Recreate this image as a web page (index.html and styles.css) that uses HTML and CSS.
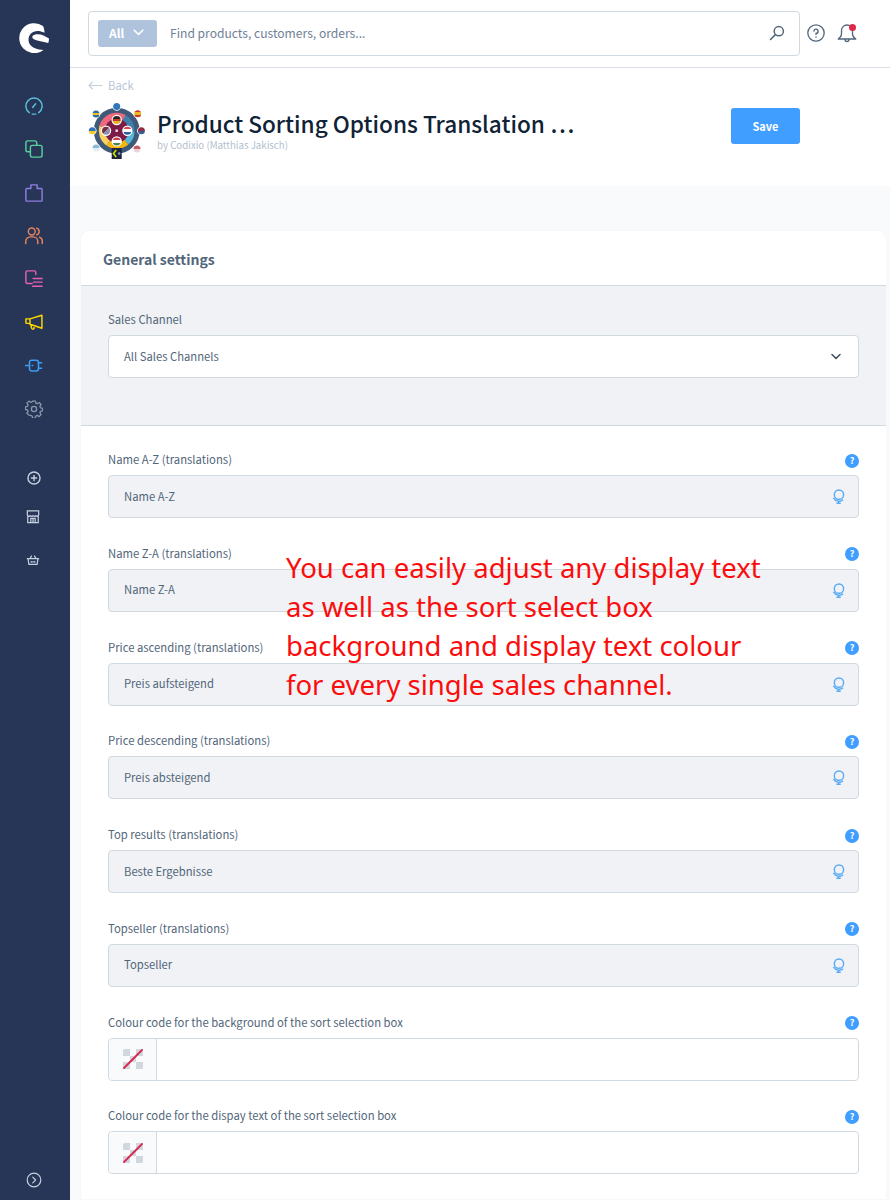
FILE: index.html
```html
<!DOCTYPE html>
<html lang="en">
<head>
<meta charset="utf-8">
<title>Product Sorting Options Translation</title>
<link rel="stylesheet" href="styles.css">
</head>
<body>
<div class="app">
  <nav class="sidebar">
    <div class="logo">
      <svg width="30" height="30" viewBox="0 0 30 30"><path fill="#fff" d="M24 3A15 15 0 1 0 24.500 27C19 26.500 12.500 25 10.300 20.500 8.800 17 9.500 13 12 10.500 15 7.500 20 7 25.500 9.800 25.500 7.500 25 5 24 3z"/><path fill="#fff" d="M14 12.500C17 10.500 21 11 24.500 12.500L30 15.500C30 17 29.800 18.500 29.300 20 25 19 20 18 16.500 17 13.500 16 12.500 14 14 12.500z"/></svg>
    </div>
    <div class="nav-main">
      <svg class="nav-icon" viewBox="0 0 20 20" fill="none" stroke="#57c5dc" stroke-width="1.600" stroke-linecap="round"><path d="M4.800 17.400A9 9 0 1 1 15.200 17.400M8.500 11.700l3.300-4.200M8 19h4"/></svg>
      <svg class="nav-icon" viewBox="0 0 20 20" fill="none" stroke="#57d09a" stroke-width="1.600"><rect x="1" y="1" width="12" height="12" rx="2"/><rect x="6" y="6" width="13" height="13" rx="2" fill="#273657"/></svg>
      <svg class="nav-icon" viewBox="0 0 20 20" fill="none" stroke="#8d7fe0" stroke-width="1.600" stroke-linejoin="round"><path d="M6.500 5H2a1 1 0 0 0-1 1V18a1 1 0 0 0 1 1h16a1 1 0 0 0 1-1V6a1 1 0 0 0-1-1h-4.500V1h-7z"/></svg>
      <svg class="nav-icon" viewBox="0 0 20 20" fill="none" stroke="#e8835e" stroke-width="1.600" stroke-linecap="round"><circle cx="7.500" cy="5" r="3.800"/><path d="M.8 18.500V16a5 5 0 0 1 5-5h3.400a5 5 0 0 1 5 5v2.500M13 1.300a3.900 3.900 0 0 1 0 7.400M16 11.300a4.700 4.700 0 0 1 3.200 4.700v2.500"/></svg>
      <svg class="nav-icon" viewBox="0 0 20 20" fill="none" stroke="#e85fb4" stroke-width="1.600" stroke-linecap="round"><path d="M8 15H2.500A1.500 1.500 0 0 1 1 13.500v-11A1.500 1.500 0 0 1 2.500 1h7.800A1.500 1.500 0 0 1 12 2.500V5M9 9.500h10M9.500 13.500h9.500M8.500 18h10.500"/></svg>
      <svg class="nav-icon" viewBox="0 0 20 20" fill="none" stroke="#ffd800" stroke-width="1.600" stroke-linejoin="round"><path d="M1 6.500h4.500v5H1.800a.8.800 0 0 1-.8-.8zM5.500 6.500 18.800 2.500v14.500l-13.300-4.500zM6.300 12.500l1 4a1.500 1.500 0 0 0 2.800.7l-.4-3.500"/></svg>
      <svg class="nav-icon" viewBox="0 0 20 20" fill="none" stroke="#3d9cf5" stroke-width="1.700" stroke-linecap="round"><rect x="5" y="3.500" width="10" height="12" rx="2.500"/><path d="M.5 9.500H5M15 6.500h3.500M15 12.500h3.500M8 9.500h.5"/></svg>
      <svg class="nav-icon" viewBox="0 0 20 20" fill="none" stroke="#8a97ab" stroke-width="1.500" stroke-linejoin="round"><circle cx="10" cy="10" r="2.900"/><path d="M8.300 1h3.400l.5 2.500 1.600.7 2.200-1.400 2.300 2.300-1.400 2.200.7 1.600 2.400.5v3.200l-2.400.5-.7 1.600 1.400 2.200-2.300 2.300-2.200-1.400-1.600.7-.5 2.500H8.300l-.5-2.500-1.600-.7L4 17.500 1.700 15.200l1.400-2.200-.7-1.600L0 10.900V7.700l2.400-.5.700-1.600L1.700 3.400 4 1.100l2.200 1.400 1.600-.7z" transform="translate(.5 .2) scale(.95)"/></svg>
    </div>
    <div class="nav-extra">
      <svg class="nav-icon-small" viewBox="0 0 16 16" fill="none" stroke="#c6d0e0" stroke-width="1.600" stroke-linecap="round"><circle cx="8" cy="8" r="6.900"/><path d="M8 5v6M5 8h6"/></svg>
      <svg class="nav-icon-small nav-shift" viewBox="0 0 16 16" fill="none" stroke="#c6d0e0" stroke-width="1.400"><path d="M1.500 1h13v4.500a1.800 1.800 0 0 1-3.200 1 2.200 2.200 0 0 1-3.300 0 2.200 2.200 0 0 1-3.300 0 1.800 1.800 0 0 1-3.200-1zM2 7v7.500h12V7M5.500 14.500V9.500h5v5M8 9.500v5"/></svg>
      <svg class="nav-icon-small nav-shift" viewBox="0 0 16 16" fill="none" stroke="#c6d0e0" stroke-width="1.400" stroke-linejoin="round"><path d="M1 6.500h14M2.300 6.500l1 6.500h9.400l1-6.500M4.500 6.500l2-3.500M11.500 6.500l-2-3.500M6 9v2M8 9v2M10 9v2"/></svg>
    </div>
    <svg class="nav-collapse" viewBox="0 0 16 16" fill="none" stroke="#c6d0e0" stroke-width="1.200" stroke-linecap="round" stroke-linejoin="round"><circle cx="8" cy="8" r="6.800"/><path d="M6.800 5.200 9.600 8l-2.800 2.800"/></svg>
  </nav>

  <div class="main">
    <header class="topbar">
      <div class="search">
        <span class="search-type">All
          <svg width="11" height="7" viewBox="0 0 11 7" fill="none" stroke="#fff" stroke-width="1.600" stroke-linecap="round" stroke-linejoin="round"><path d="M1.200 1.200 5.500 5.400l4.300-4.200"/></svg>
        </span>
        <span class="search-text">Find products, customers, orders...</span>
        <svg class="search-icon" width="16" height="16" viewBox="0 0 16 16" fill="none" stroke="#52667a" stroke-width="1.500" stroke-linecap="round"><circle cx="9.800" cy="6.200" r="4.600"/><path d="M6.400 9.600 1.500 14.500"/></svg>
      </div>
      <svg class="help-icon" width="18" height="18" viewBox="0 0 18 18" fill="none" stroke="#52667a" stroke-width="1.300" stroke-linecap="round"><circle cx="9" cy="9" r="8.200"/><path d="M6.900 7.100A2.100 2.100 0 1 1 9 9.400v1M9 12.800v.4"/></svg>
      <span class="bell">
        <svg width="20" height="20" viewBox="0 0 20 20" fill="none" stroke="#52667a" stroke-width="1.300" stroke-linejoin="round"><path d="M10 2a5.500 5.500 0 0 0-5.500 5.500V11c0 2-1 3.500-3.300 5h17.600c-2.300-1.500-3.300-3-3.300-5V7.500A5.500 5.500 0 0 0 10 2zM8 16.500a2 2 0 0 0 4 0"/></svg>
        <span class="bell-dot"></span>
      </span>
    </header>

    <section class="page-head">
      <div class="back">
        <svg width="15" height="9" viewBox="0 0 15 9" fill="none" stroke="#c3cedd" stroke-width="1.100" stroke-linecap="round" stroke-linejoin="round"><path d="M14 4.500H1M4.500 1 1 4.500 4.500 8"/></svg>
        <span>Back</span>
      </div>
      <div class="title-row">
        <svg class="plugin-logo" width="58" height="58" viewBox="0 0 58 58">
          <defs>
            <linearGradient id="de" x1="0" y1="0" x2="0" y2="1"><stop offset=".34" stop-color="#2b2320"/><stop offset=".34" stop-color="#c0392b"/><stop offset=".67" stop-color="#c0392b"/><stop offset=".67" stop-color="#e6b422"/></linearGradient>
            <linearGradient id="nl" x1="0" y1="0" x2="0" y2="1"><stop offset=".34" stop-color="#d64550"/><stop offset=".34" stop-color="#fff"/><stop offset=".67" stop-color="#fff"/><stop offset=".67" stop-color="#2d5fa0"/></linearGradient>
            <linearGradient id="hu" x1="0" y1="0" x2="0" y2="1"><stop offset=".34" stop-color="#c9404c"/><stop offset=".34" stop-color="#fff"/><stop offset=".67" stop-color="#fff"/><stop offset=".67" stop-color="#48865a"/></linearGradient>
            <linearGradient id="ua" x1="0" y1="0" x2="0" y2="1"><stop offset=".5" stop-color="#2f72b8"/><stop offset=".5" stop-color="#f3c92c"/></linearGradient>
            <linearGradient id="es" x1="0" y1="0" x2="0" y2="1"><stop offset=".28" stop-color="#c63a2c"/><stop offset=".28" stop-color="#edb71f"/><stop offset=".72" stop-color="#edb71f"/><stop offset=".72" stop-color="#c63a2c"/></linearGradient>
            <linearGradient id="se" x1="0" y1="0" x2="0" y2="1"><stop offset=".4" stop-color="#2f6da6"/><stop offset=".4" stop-color="#e8c12c"/><stop offset=".6" stop-color="#e8c12c"/><stop offset=".6" stop-color="#2f6da6"/></linearGradient>
            <linearGradient id="us" x1="0" y1="0" x2="0" y2="1"><stop offset=".5" stop-color="#c85a68"/><stop offset=".5" stop-color="#e9d5da"/></linearGradient>
            <linearGradient id="pk" x1="0" y1="0" x2="0" y2="1"><stop offset=".5" stop-color="#8f2f42"/><stop offset=".5" stop-color="#3c5a90"/></linearGradient>
            <linearGradient id="wl" x1="0" y1="0" x2="0" y2="1"><stop offset=".5" stop-color="#8db8d8"/><stop offset=".5" stop-color="#e4edf2"/></linearGradient>
            <linearGradient id="uk" x1="0" y1="0" x2="1" y2="1"><stop offset=".5" stop-color="#7c2f48"/><stop offset=".5" stop-color="#8d90a8"/></linearGradient>
          </defs>
          <circle cx="28.700" cy="28.700" r="23" fill="#3e5a78"/>
          <path d="M28.700 28.700 11.300 24A18 18 0 0 1 37.700 13.100z" fill="#f0687c"/>
          <path d="M28.700 28.700 37.700 13.100A18 18 0 0 1 46.600 30.300z" fill="#3f81ad"/>
          <path d="M28.700 28.700 46.600 30.300A18 18 0 0 1 40.300 42.500z" fill="#55b8d8"/>
          <path d="M28.700 28.700 40.300 42.500A18 18 0 0 1 18.400 43.400z" fill="#f6b80e"/>
          <path d="M28.700 28.700 18.400 43.400A18 18 0 0 1 11.300 24z" fill="#fdd062"/>
          <circle cx="28.700" cy="28.700" r="12" fill="#7a1c45"/>
          <circle cx="28.700" cy="18" r="5.200" fill="#fff"/><circle cx="28.700" cy="18" r="4" fill="url(#de)"/>
          <circle cx="18" cy="28.700" r="5.200" fill="#fff"/><circle cx="18" cy="28.700" r="4" fill="url(#uk)"/>
          <circle cx="39.400" cy="28.700" r="5.200" fill="#fff"/><circle cx="39.400" cy="28.700" r="4" fill="url(#nl)"/>
          <circle cx="28.700" cy="39.400" r="5.200" fill="#fff"/><circle cx="28.700" cy="39.400" r="4" fill="url(#hu)"/>
          <rect x="27.500" y="27.500" width="2.400" height="2.400" fill="#f2e9ec"/>
          <circle cx="28.700" cy="4.400" r="4.300" fill="#fff"/><circle cx="28.700" cy="4.400" r="3.500" fill="#2e78bd"/>
          <circle cx="49.700" cy="11.700" r="4.300" fill="#fff"/><circle cx="49.700" cy="11.700" r="3.500" fill="url(#es)"/>
          <circle cx="53.400" cy="28.700" r="4.300" fill="#fff"/><circle cx="53.400" cy="28.700" r="3.500" fill="url(#pk)"/>
          <circle cx="49" cy="47" r="4.300" fill="#fff"/><circle cx="49" cy="47" r="3.500" fill="url(#us)"/>
          <circle cx="8" cy="12" r="4.300" fill="#fff"/><circle cx="8" cy="12" r="3.500" fill="url(#se)"/>
          <circle cx="4.300" cy="28.700" r="4.300" fill="#fff"/><circle cx="4.300" cy="28.700" r="3.500" fill="url(#ua)"/>
          <circle cx="8" cy="46" r="4.300" fill="#fff"/><circle cx="8" cy="46" r="3.500" fill="url(#wl)"/>
          <rect x="23.700" y="46" width="10" height="11" fill="#1b2340"/>
          <path d="M28.200 48l-2.700 3.500 2.700 3.500" fill="none" stroke="#c6e000" stroke-width="1.700"/>
          <circle cx="31.200" cy="51.500" r="1.300" fill="#8fa3b5"/>
        </svg>
        <div class="title-block">
          <h1 class="title">Product Sorting Options Translation …</h1>
          <div class="byline">by Codixio (Matthias Jakisch)</div>
        </div>
        <button class="save" type="button">Save</button>
      </div>
    </section>

    <section class="content">
      <div class="card">
        <h2 class="card-title">General settings</h2>
        <div class="channel">
          <label class="label">Sales Channel</label>
          <div class="select">All Sales Channels
            <svg width="10" height="7" viewBox="0 0 10 7" fill="none" stroke="#3d4c5c" stroke-width="1.500" stroke-linecap="round" stroke-linejoin="round"><path d="M1 1.500l4 4 4-4"/></svg>
          </div>
        </div>
        <div class="fields">
          <div class="field">
            <div class="field-head"><label class="label">Name A-Z (translations)</label><span class="hint">?</span></div>
            <div class="input disabled">Name A-Z <svg class="globe" viewBox="0 0 14 16" fill="none" stroke="#57aaf7" stroke-width="1.500"><circle cx="7.500" cy="6" r="5"/><path d="M1.500 9.500c2.500 4 7.500 4.500 10.500 2M7 13v2.300M4.800 15.300h4.600"/></svg></div>
          </div>
          <div class="field">
            <div class="field-head"><label class="label">Name Z-A (translations)</label><span class="hint">?</span></div>
            <div class="input disabled">Name Z-A <svg class="globe" viewBox="0 0 14 16" fill="none" stroke="#57aaf7" stroke-width="1.500"><circle cx="7.500" cy="6" r="5"/><path d="M1.500 9.500c2.500 4 7.500 4.500 10.500 2M7 13v2.300M4.800 15.300h4.600"/></svg></div>
          </div>
          <div class="field">
            <div class="field-head"><label class="label">Price ascending (translations)</label><span class="hint">?</span></div>
            <div class="input disabled">Preis aufsteigend <svg class="globe" viewBox="0 0 14 16" fill="none" stroke="#57aaf7" stroke-width="1.500"><circle cx="7.500" cy="6" r="5"/><path d="M1.500 9.500c2.500 4 7.500 4.500 10.500 2M7 13v2.300M4.800 15.300h4.600"/></svg></div>
          </div>
          <div class="field">
            <div class="field-head"><label class="label">Price descending (translations)</label><span class="hint">?</span></div>
            <div class="input disabled">Preis absteigend <svg class="globe" viewBox="0 0 14 16" fill="none" stroke="#57aaf7" stroke-width="1.500"><circle cx="7.500" cy="6" r="5"/><path d="M1.500 9.500c2.500 4 7.500 4.500 10.500 2M7 13v2.300M4.800 15.300h4.600"/></svg></div>
          </div>
          <div class="field">
            <div class="field-head"><label class="label">Top results (translations)</label><span class="hint">?</span></div>
            <div class="input disabled">Beste Ergebnisse <svg class="globe" viewBox="0 0 14 16" fill="none" stroke="#57aaf7" stroke-width="1.500"><circle cx="7.500" cy="6" r="5"/><path d="M1.500 9.500c2.500 4 7.500 4.500 10.500 2M7 13v2.300M4.800 15.300h4.600"/></svg></div>
          </div>
          <div class="field">
            <div class="field-head"><label class="label">Topseller (translations)</label><span class="hint">?</span></div>
            <div class="input disabled">Topseller <svg class="globe" viewBox="0 0 14 16" fill="none" stroke="#57aaf7" stroke-width="1.500"><circle cx="7.500" cy="6" r="5"/><path d="M1.500 9.500c2.500 4 7.500 4.500 10.500 2M7 13v2.300M4.800 15.300h4.600"/></svg></div>
          </div>
          <div class="field">
            <div class="field-head"><label class="label">Colour code for the background of the sort selection box</label><span class="hint">?</span></div>
            <div class="input colour">
              <span class="swatch"><svg width="20" height="20" viewBox="0 0 20 20"><path fill="#d1d7de" d="M0 1.500A1.500 1.500 0 0 1 1.500 0H7v7H0zM13 0h5.500A1.500 1.500 0 0 1 20 1.500V7h-7zM7 7h6v6H7zM0 13h7v7H1.500A1.500 1.500 0 0 1 0 18.500zM13 13h7v5.500a1.500 1.500 0 0 1-1.500 1.500H13z"/><path d="M1 19 19 1" stroke="#d9264f" stroke-width="1.800" stroke-linecap="round"/></svg></span>
            </div>
          </div>
          <div class="field">
            <div class="field-head"><label class="label">Colour code for the dispay text of the sort selection box</label><span class="hint">?</span></div>
            <div class="input colour">
              <span class="swatch"><svg width="20" height="20" viewBox="0 0 20 20"><path fill="#d1d7de" d="M0 1.500A1.500 1.500 0 0 1 1.500 0H7v7H0zM13 0h5.500A1.500 1.500 0 0 1 20 1.500V7h-7zM7 7h6v6H7zM0 13h7v7H1.500A1.500 1.500 0 0 1 0 18.500zM13 13h7v5.500a1.500 1.500 0 0 1-1.500 1.500H13z"/><path d="M1 19 19 1" stroke="#d9264f" stroke-width="1.800" stroke-linecap="round"/></svg></span>
            </div>
          </div>
        </div>
        <p class="annotation">You can easily adjust any display text<br>as well as the sort select box<br>background and display text colour<br>for every single sales channel.</p>
      </div>
    </section>
  </div>
</div>
</body>
</html>
```

FILE: styles.css
```css
* { box-sizing: border-box; }
html, body { margin: 0; height: 1200px; overflow: hidden; }
body { font-family: "Noto Sans CJK SC", "Open Sans", sans-serif; color: #52667a; font-size: 11.300px; background: #f9fafb; }
.app { display: flex; height: 1200px; }

.sidebar { position: relative; width: 70px; flex: none; background: #273657; display: flex; flex-direction: column; align-items: center; padding-right: 2px; }
.logo { height: 30px; margin-top: 23px; }
.logo svg { display: block; }
.nav-main { margin-top: 44px; display: flex; flex-direction: column; align-items: center; gap: 25.300px; }
.nav-icon { display: block; width: 18px; height: 18px; }
.nav-extra { margin-top: 53px; display: flex; flex-direction: column; align-items: center; gap: 25px; }
.nav-extra svg:last-child { margin-top: 4px; }
.nav-icon-small { display: block; width: 14px; height: 14px; }
.nav-shift { margin-left: -3px; }
.nav-collapse { position: absolute; left: 26px; bottom: 12px; width: 16px; height: 16px; }

.main { flex: 1; min-width: 0; }
.topbar { height: 68px; background: #fff; border-bottom: 1px solid #d9dee6; display: flex; align-items: center; padding: 0 0 1px 18px; }
.search { width: 712px; height: 45px; border: 1px solid #d1d9e0; border-radius: 4px; background: #fff; display: flex; align-items: center; padding: 0 14px 0 9px; }
.search-type { width: 59px; height: 27px; border-radius: 3px; background: #b0c3dc; color: #fff; font-weight: 700; font-size: 12px; display: flex; align-items: center; gap: 9px; padding: 0 0 1px 11px; }
.search-text { margin-left: 13px; flex: 1; font-size: 12.100px; color: #6f8095; padding-bottom: 2px; }
.help-icon { margin-left: 7px; }
.bell { position: relative; margin-left: 12px; width: 20px; height: 20px; }
.bell svg { display: block; }
.bell-dot { position: absolute; top: 1px; right: 1px; width: 7px; height: 7px; border-radius: 50%; background: #de294c; }

.page-head { height: 118px; background: #fff; padding: 8px 90px 0 18px; }
.back { display: flex; align-items: center; gap: 5px; height: 17px; font-size: 11.300px; color: #b9c6d6; }
.back svg { display: block; margin-top: 1px; }
.title-row { display: flex; align-items: flex-start; }
.plugin-logo { flex: none; margin: 9px 0 0 0; }
.title-block { margin-left: 11px; flex: 1; }
.title { margin: 15px 0 0; font-size: 22.600px; line-height: 32px; font-weight: 500; color: #0f2236; }
.byline { font-size: 9.700px; line-height: 14px; color: #b3c0cf; margin-top: -2px; }
.save { margin-top: 15px; width: 69px; height: 36px; border: 0; border-radius: 3px; background: #3f9eff; color: #fff; font: 700 11px "Noto Sans CJK SC", sans-serif; }

.content { padding: 45px 4px 0 11px; }
.card { position: relative; background: #fff; border-radius: 8px 8px 0 0; box-shadow: 0 0 1px rgba(0,0,0,.1); }
.card-title { margin: 0; height: 55px; padding-left: 22px; font-size: 14px; font-weight: 700; line-height: 56px; color: #52667a; border-bottom: 1px solid #d1d9e0; }
.channel { height: 140px; background: #f0f2f5; border-bottom: 1px solid #d1d9e0; padding: 23px 27px 0; }
.label { display: block; font-size: 11.300px; line-height: 20px; color: #52667a; }
.select { margin-top: 6px; height: 43px; background: #fff; border: 1px solid #d1d9e0; border-radius: 4px; display: flex; align-items: center; justify-content: space-between; padding: 0 17px 2px 15px; font-size: 11.250px; color: #52667a; }
.select svg { display: block; margin-top: 2px; }
.fields { padding: 23px 27px 0; display: grid; grid-auto-rows: 93.750px; }
.field-head { display: flex; justify-content: space-between; align-items: center; height: 20px; }
.hint { width: 14px; height: 14px; margin-top: 3px; border-radius: 50%; background: #3f9eff; color: #fff; font-size: 9px; font-weight: 700; line-height: 14px; text-align: center; }
.input { margin-top: 6px; height: 43px; border: 1px solid #d1d9e0; border-radius: 4px; display: flex; align-items: center; font-size: 11.250px; color: #52667a; }
.input.disabled { background: #f0f2f5; justify-content: space-between; padding: 0 13px 2px 15px; }
.input.colour { background: #fff; }
.globe { display: block; width: 13px; height: 15px; margin-top: 2px; }
.swatch { width: 48px; height: 100%; background: #f9fafb; border-right: 1px solid #d1d9e0; border-radius: 4px 0 0 4px; display: flex; align-items: center; justify-content: center; }
.annotation { position: absolute; left: 205px; top: 317px; margin: 0; font-family: "Noto Sans", "Open Sans", sans-serif; font-size: 27.500px; line-height: 39px; color: #fb0d0d; white-space: nowrap; }
```
